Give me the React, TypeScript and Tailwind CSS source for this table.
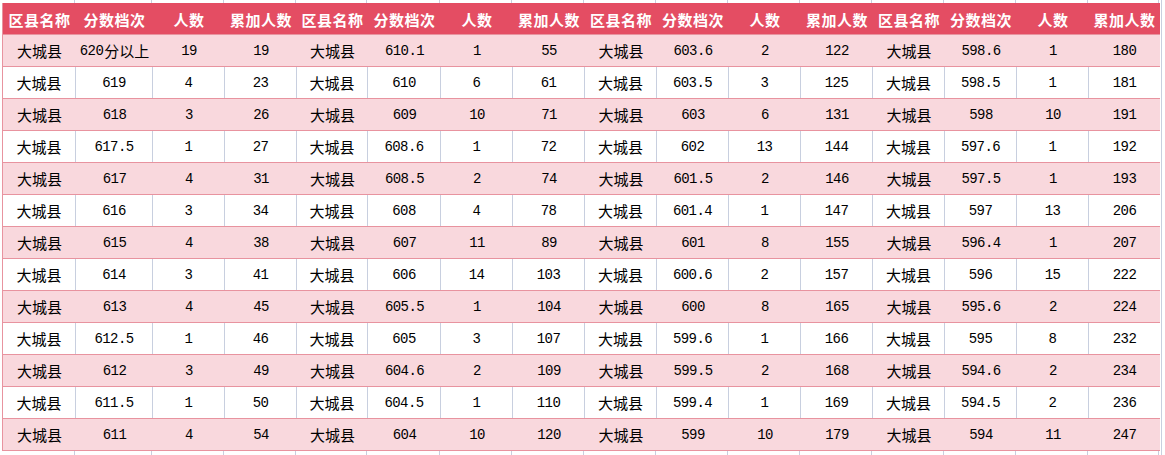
import React from 'react'

const cols = [73, 77, 72, 72, 71, 73, 72, 72, 72, 72, 72, 72, 72, 72, 72, 71]

const headers = ['区县名称', '分数档次', '人数', '累加人数']

const groups: [string, number, number][][] = [
  [
    ['620分以上', 19, 19],
    ['619', 4, 23],
    ['618', 3, 26],
    ['617.5', 1, 27],
    ['617', 4, 31],
    ['616', 3, 34],
    ['615', 4, 38],
    ['614', 3, 41],
    ['613', 4, 45],
    ['612.5', 1, 46],
    ['612', 3, 49],
    ['611.5', 1, 50],
    ['611', 4, 54],
  ],
  [
    ['610.1', 1, 55],
    ['610', 6, 61],
    ['609', 10, 71],
    ['608.6', 1, 72],
    ['608.5', 2, 74],
    ['608', 4, 78],
    ['607', 11, 89],
    ['606', 14, 103],
    ['605.5', 1, 104],
    ['605', 3, 107],
    ['604.6', 2, 109],
    ['604.5', 1, 110],
    ['604', 10, 120],
  ],
  [
    ['603.6', 2, 122],
    ['603.5', 3, 125],
    ['603', 6, 131],
    ['602', 13, 144],
    ['601.5', 2, 146],
    ['601.4', 1, 147],
    ['601', 8, 155],
    ['600.6', 2, 157],
    ['600', 8, 165],
    ['599.6', 1, 166],
    ['599.5', 2, 168],
    ['599.4', 1, 169],
    ['599', 10, 179],
  ],
  [
    ['598.6', 1, 180],
    ['598.5', 1, 181],
    ['598', 10, 191],
    ['597.6', 1, 192],
    ['597.5', 1, 193],
    ['597', 13, 206],
    ['596.4', 1, 207],
    ['596', 15, 222],
    ['595.6', 2, 224],
    ['595', 8, 232],
    ['594.6', 2, 234],
    ['594.5', 2, 236],
    ['594', 11, 247],
  ],
]

const gridCols =
  'grid grid-cols-[73px_77px_72px_72px_71px_73px_72px_72px_72px_72px_72px_72px_72px_72px_72px_71px]'

const cjk = "font-['Noto_Sans_CJK_SC',sans-serif]"
const mono = "font-['Liberation_Mono','Noto_Sans_CJK_SC',monospace] text-[14px] tracking-[-0.6px]"

// renders digits in mono, trailing chinese in cjk font
const NumText = ({ value }: { value: string | number }) => {
  const s = String(value)
  const m = s.match(/^([0-9.]+)(.*)$/)
  if (!m) return <span className={`${cjk} text-[15px]`}>{s}</span>
  return (
    <>
      <span className={mono}>{m[1]}</span>
      {m[2] && <span className={`${cjk} text-[15px] ml-[1px]`}>{m[2]}</span>}
    </>
  )
}

const GridStrip = ({ className }: { className: string }) => (
  <div className={`${gridCols} ${className}`}>
    {cols.map((_, i) => (
      <div key={i} className="border-r border-[#c8cfdf]" />
    ))}
  </div>
)

export default function App() {
  const rows = groups[0].map((_, r) => groups.map((g) => g[r]))

  return (
    <div className="w-[1165px] h-[455px] bg-white overflow-hidden flex">
      <div className="w-[2px] shrink-0" />
      <div className="w-[1158px] shrink-0 flex flex-col">
        <GridStrip className="h-[3px] shrink-0" />
        <div className="border-l border-r border-[#e8939f]">
          {/* Header */}
          <div className={`${gridCols} h-8 bg-[#e44d63] border-b border-[#e8939f] -mr-px`}>
            {cols.map((_, i) => (
              <div
                key={i}
                className={`flex items-center justify-center pt-[3px] text-white font-bold text-[15px] tracking-[0.5px] ${cjk}`}
              >
                {headers[i % 4]}
              </div>
            ))}
          </div>
          {/* Body */}
          {rows.map((row, r) => {
            const pink = r % 2 === 0
            return (
              <div
                key={r}
                className={`${gridCols} h-8 border-b border-[#e8939f] -mr-px ${pink ? 'bg-[#f9d8dd]' : 'bg-white'}`}
              >
                {row.flatMap(([score, count, total], g) => [
                  <div
                    key={`${g}a`}
                    className={`flex items-center justify-center pt-[2px] text-black text-[15px] ${cjk} ${
                      pink ? '' : 'border-r border-[#c8cfdf]'
                    }`}
                  >
                    大城县
                  </div>,
                  <div
                    key={`${g}b`}
                    className={`flex items-center justify-center pt-[2px] text-black ${pink ? '' : 'border-r border-[#c8cfdf]'}`}
                  >
                    <NumText value={score} />
                  </div>,
                  <div
                    key={`${g}c`}
                    className={`flex items-center justify-center pt-[2px] text-black ${pink ? '' : 'border-r border-[#c8cfdf]'}`}
                  >
                    <NumText value={count} />
                  </div>,
                  <div
                    key={`${g}d`}
                    className={`flex items-center justify-center pt-[2px] text-black ${
                      pink || g === 3 ? '' : 'border-r border-[#c8cfdf]'
                    }`}
                  >
                    <NumText value={total} />
                  </div>,
                ])}
              </div>
            )
          })}
        </div>
        <GridStrip className="flex-1" />
      </div>
      <div className="flex-1 flex">
        <div className="ml-[1px] border-l border-[#c8cfdf] h-full" />
      </div>
    </div>
  )
}
